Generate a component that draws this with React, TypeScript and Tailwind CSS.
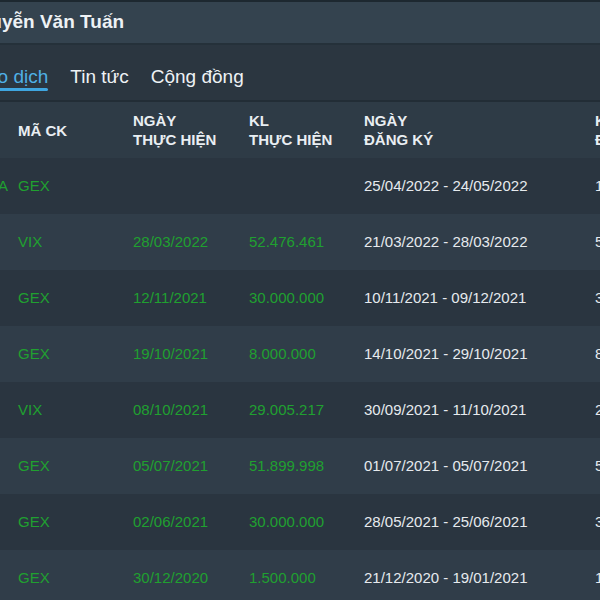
const ROWS = [
  { side: 'MUA', code: 'GEX', date: '', vol: '', reg: '25/04/2022 - 24/05/2022', regVol: '10.000.000' },
  { side: '', code: 'VIX', date: '28/03/2022', vol: '52.476.461', reg: '21/03/2022 - 28/03/2022', regVol: '55.000.000' },
  { side: '', code: 'GEX', date: '12/11/2021', vol: '30.000.000', reg: '10/11/2021 - 09/12/2021', regVol: '30.000.000' },
  { side: '', code: 'GEX', date: '19/10/2021', vol: '8.000.000', reg: '14/10/2021 - 29/10/2021', regVol: '8.000.000' },
  { side: '', code: 'VIX', date: '08/10/2021', vol: '29.005.217', reg: '30/09/2021 - 11/10/2021', regVol: '29.005.217' },
  { side: '', code: 'GEX', date: '05/07/2021', vol: '51.899.998', reg: '01/07/2021 - 05/07/2021', regVol: '51.899.998' },
  { side: '', code: 'GEX', date: '02/06/2021', vol: '30.000.000', reg: '28/05/2021 - 25/06/2021', regVol: '30.000.000' },
  { side: '', code: 'GEX', date: '30/12/2020', vol: '1.500.000', reg: '21/12/2020 - 19/01/2021', regVol: '1.500.000' }
];

export default function App() {
  return (
    <div
      className="w-[600px] h-[600px] overflow-hidden bg-[#2b3640]"
      style={{ fontFamily: '"Liberation Sans", Arial, sans-serif' }}
    >
      <div className="w-[820px] -ml-[100px]">
        <div className="h-[2px] bg-[#1d2830]" />
        {/* header */}
        <div className="h-[43px] flex items-center pl-[65px] bg-[#34434f] border-b-2 border-[#25313a]">
          <span className="text-[19px] font-bold text-[#eef2f5]">Nguyễn Văn Tuấn</span>
        </div>

        {/* tabs */}
        <div className="h-[57px] flex items-start pl-[68px] gap-[22px] bg-[#2b3640] border-b-2 border-[#222d36] pt-[21px]">
          <div className="flex flex-col">
            <span className="text-[19px] leading-[22px] text-[#4fb0e6]">Giao dịch</span>
            <span className="h-[3px] bg-[#3fa6e0] rounded-sm" />
          </div>
          <span className="text-[19px] leading-[22px] text-[#eef2f5]">Tin tức</span>
          <span className="text-[19px] leading-[22px] text-[#eef2f5]">Cộng đồng</span>
        </div>

        {/* table */}
        <table className="table-fixed border-collapse text-[15px]">
          <colgroup>
            <col className="w-[110px]" />
            <col className="w-[115px]" />
            <col className="w-[116px]" />
            <col className="w-[115px]" />
            <col className="w-[231px]" />
            <col className="w-[133px]" />
          </colgroup>
          <thead>
            <tr className="h-[56px] bg-[#2e3b46] text-left font-bold text-[#e9eef2] leading-[19px]">
              <th className="pl-2 font-bold">LOẠI</th>
              <th className="pl-2 font-bold">MÃ CK</th>
              <th className="pl-2 font-bold">NGÀY<br />THỰC HIỆN</th>
              <th className="pl-2 font-bold">KL<br />THỰC HIỆN</th>
              <th className="pl-2 font-bold">NGÀY<br />ĐĂNG KÝ</th>
              <th className="pl-2 font-bold">KL<br />ĐĂNG KÝ</th>
            </tr>
          </thead>
          <tbody>
            {ROWS.map((r, i) => (
              <tr key={i} className={`h-[56px] ${i % 2 === 0 ? 'bg-[#2a3540]' : 'bg-[#303d49]'}`}>
                <td className="pr-[2px] text-right text-[#20a030]">{r.side}</td>
                <td className="pl-2 text-[#20a030]">{r.code}</td>
                <td className="pl-2 text-[#20a030]">{r.date}</td>
                <td className="pl-2 text-[#20a030]">{r.vol}</td>
                <td className="pl-2 text-[#e6eaee]">{r.reg}</td>
                <td className="pl-2 text-[#e6eaee]">{r.regVol}</td>
              </tr>
            ))}
          </tbody>
        </table>
      </div>
    </div>
  );
}
